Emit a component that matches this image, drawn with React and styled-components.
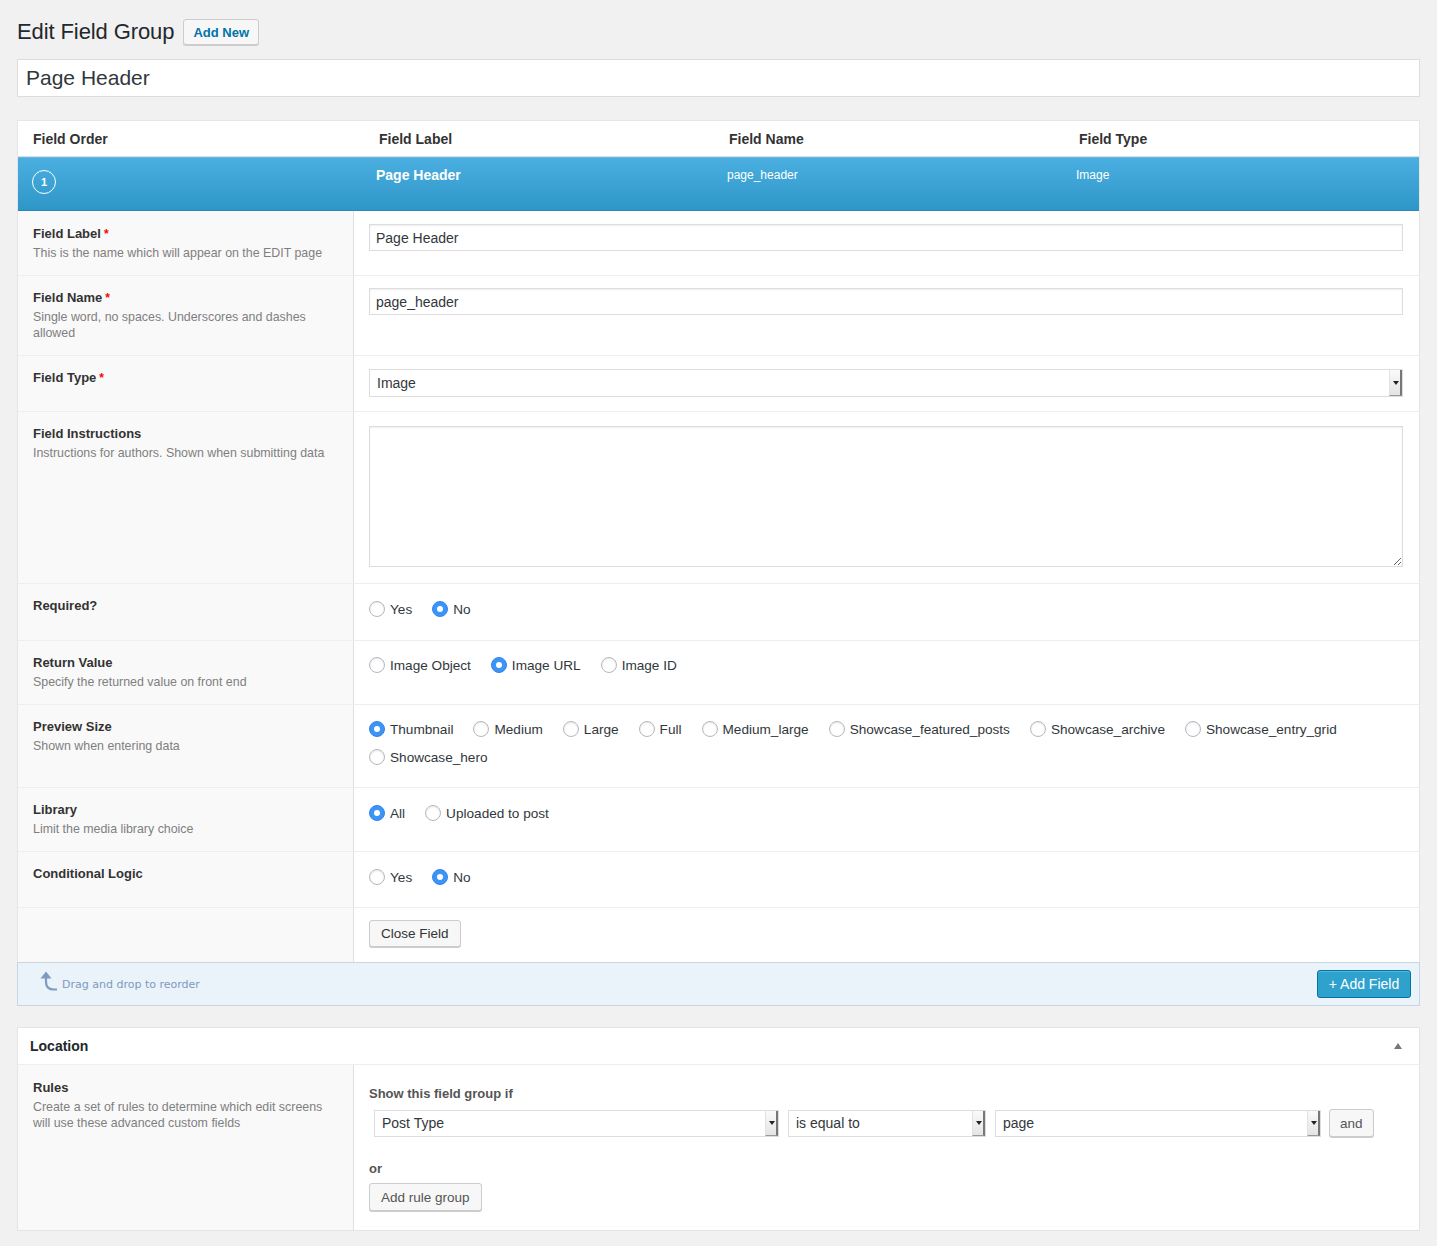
import React from "react";
import styled, { createGlobalStyle } from "styled-components";

const GlobalStyle = createGlobalStyle`
  * {
    box-sizing: border-box;
  }

  body {
    margin: 0;
    background: #f1f1f1;
    font-family: "Liberation Sans", Arial, sans-serif;
    color: #444;
  }
`;

const Page = styled.div`
  padding: 19px 17px 17px;
`;

const TitleRow = styled.div`
  display: flex;
  align-items: center;
  height: 26px;

  h1 {
    margin: 0 9px 0 0;
    font-size: 22px;
    font-weight: 400;
    color: #23282d;
    letter-spacing: -0.1px;
  }
`;

const Button = styled.button`
  height: ${props => props.$h || 27}px;
  padding: 0 ${props => props.$px || 11}px;
  border: 1px solid #ccc;
  border-radius: 3px;
  background: #f7f7f7;
  box-shadow: 0 1px 0 #ccc;
  font-family: inherit;
  font-size: ${props => props.$fs || 13.5}px;
  font-weight: ${props => (props.$bold ? 700 : 400)};
  color: ${props => props.$color || "#555"};
  cursor: pointer;
`;

const PrimaryButton = styled.button`
  height: 28px;
  width: 94px;
  border: 1px solid #0074a2;
  border-radius: 3px;
  background: #2ea2cc;
  box-shadow: inset 0 1px 0 rgba(120, 200, 230, 0.5);
  color: #fff;
  font-family: inherit;
  font-size: 14px;
`;

const TitleInput = styled.input`
  display: block;
  width: 100%;
  height: 38px;
  margin-top: 14px;
  padding: 0 8px;
  border: 1px solid #ddd;
  background: #fff;
  font-family: inherit;
  font-size: 21px;
  color: #32373c;
  outline: none;
`;

const Box = styled.div`
  margin-top: ${props => props.$mt}px;
  background: #fff;
  border: 1px solid #e5e5e5;
`;

const HeadRow = styled.div`
  display: grid;
  grid-template-columns: 346px 350px 350px 1fr;
  align-items: center;
  height: 36px;
  padding-left: 15px;
  border-bottom: 1px solid #dcdcdc;
  font-size: 14px;
  font-weight: 700;
  color: #333;
`;

const BlueRow = styled.div`
  display: grid;
  grid-template-columns: 344px 351px 349px 1fr;
  align-items: start;
  height: 54px;
  padding-left: 14px;
  background: linear-gradient(#4aafe0, #2f96c8);
  border-top: 1px solid #5ebbe6;
  border-bottom: 1px solid #2a88b8;
  color: #fff;
`;

const OrderCircle = styled.span`
  display: flex;
  align-items: center;
  justify-content: center;
  width: 24px;
  height: 24px;
  margin-top: 12px;
  border: 1.5px solid #fff;
  border-radius: 50%;
  font-size: 11px;
  font-weight: 700;
`;

const BlueCell = styled.span`
  padding-top: ${props => (props.$big ? 9 : 10)}px;
  font-size: ${props => (props.$big ? 14 : 12)}px;
  font-weight: ${props => (props.$big ? 700 : 400)};
`;

const SettingRow = styled.div`
  display: grid;
  grid-template-columns: 336px 1fr;
  min-height: ${props => props.$h}px;
  border-top: ${props => (props.$first ? "none" : "1px solid #eee")};
`;

const LabelCell = styled.div`
  padding: ${props => props.$pt || 14}px 16px 12px 15px;
  background: #f9f9f9;
  border-right: 1px solid #e1e1e1;
`;

const Label = styled.div`
  font-size: 13px;
  font-weight: 700;
  line-height: 16px;
  color: #333;

  em {
    font-style: normal;
    color: #f00;
    margin-left: 3px;
    font-size: 12px;
  }
`;

const Desc = styled.div`
  margin-top: 3px;
  font-size: 12.4px;
  line-height: 16px;
  color: #7f7f7f;
`;

const InputCell = styled.div`
  padding: ${props => props.$pt || 13}px 16px 13px 15px;
`;

const TextInput = styled.input`
  display: block;
  width: 100%;
  height: 27px;
  padding: 0 6px;
  border: 1px solid #ddd;
  box-shadow: inset 0 1px 2px rgba(0, 0, 0, 0.07);
  font-family: inherit;
  font-size: 14px;
  color: #32373c;
  outline: none;
`;

const TextArea = styled.textarea`
  display: block;
  width: 100%;
  height: 141px;
  padding: 6px;
  border: 1px solid #ddd;
  box-shadow: inset 0 1px 2px rgba(0, 0, 0, 0.07);
  font-family: inherit;
  font-size: 14px;
  outline: none;
`;

const SelectBox = styled.div`
  display: flex;
  align-items: center;
  width: ${props => (props.$w ? `${props.$w}px` : "100%")};
  height: ${props => props.$h || 27}px;
  padding-left: 7px;
  border: 1px solid #ddd;
  background: #fff;
  font-size: 14px;
  color: #32373c;

  span {
    flex: 1;
  }
`;

const SelectArrow = styled.i`
  position: relative;
  align-self: stretch;
  width: 13px;
  background: linear-gradient(#fafafa, #e4e4e4);
  border-left: 1px solid #e2e2e2;
  border-right: 2px solid #777;
  border-bottom: 1px solid #999;

  &::after {
    content: "";
    position: absolute;
    left: 3px;
    top: 50%;
    margin-top: -2px;
    border-left: 3px solid transparent;
    border-right: 3px solid transparent;
    border-top: 4px solid #222;
  }
`;

const RadioList = styled.div`
  display: flex;
  flex-wrap: wrap;
  column-gap: 20px;
  row-gap: 8px;
  padding-top: ${props => props.$pt || 2}px;
`;

const RadioItem = styled.label`
  display: flex;
  align-items: center;
  gap: 5px;
  height: 20px;
  font-size: 13.6px;
  color: #32373c;
`;

const RadioDot = styled.span`
  position: relative;
  width: 16px;
  height: 16px;
  border-radius: 50%;
  border: 1px solid ${props => (props.$on ? "#2f86ee" : "#b4b9be")};
  background: ${props => (props.$on ? "#3d94f6" : "#fff")};
  box-shadow: ${props => (props.$on ? "none" : "inset 0 1px 2px rgba(0,0,0,0.1)")};

  &::after {
    content: "";
    display: ${props => (props.$on ? "block" : "none")};
    position: absolute;
    left: 4px;
    top: 4px;
    width: 6px;
    height: 6px;
    border-radius: 50%;
    background: #fff;
  }
`;

const Footer = styled.div`
  display: flex;
  align-items: center;
  justify-content: space-between;
  height: 44px;
  margin: 0 -1px -1px;
  padding: 0 8px 0 20px;
  background: #eaf2fa;
  border: 1px solid #c7d7e2;
`;

const DragHint = styled.div`
  display: flex;
  align-items: center;
  gap: 4px;
  font-family: "DejaVu Sans", sans-serif;
  font-size: 11px;
  color: #7c9bc0;

  svg {
    transform: translateY(-3px);
  }
`;

const BoxHead = styled.div`
  display: flex;
  align-items: center;
  justify-content: space-between;
  height: 37px;
  padding: 0 17px 0 12px;
  border-bottom: 1px solid #eee;
  font-size: 14px;
  font-weight: 700;
  color: #23282d;

  i {
    border-left: 4.5px solid transparent;
    border-right: 4.5px solid transparent;
    border-bottom: 6px solid #777;
  }
`;

const RulesCell = styled.div`
  padding: 21px 16px 18px 15px;
`;

const SubHead = styled.div`
  font-size: 13px;
  font-weight: 700;
  line-height: 16px;
  color: #555;
  margin-top: ${props => props.$mt || 0}px;
`;

const RuleLine = styled.div`
  display: flex;
  align-items: center;
  gap: 9px;
  margin-top: 7px;
  padding-left: 5px;

  button {
    margin-left: -1px;
  }
`;

const RuleGroupButton = styled(Button)`
  margin-top: 6px;
  height: 28px;
`;

const Radios = ({ options, value, pt }) => (
  <RadioList $pt={pt}>
    {options.map(o => (
      <RadioItem key={o}>
        <RadioDot $on={o === value} />
        {o}
      </RadioItem>
    ))}
  </RadioList>
);

const Select = ({ children, w, h }) => (
  <SelectBox $w={w} $h={h}>
    <span>{children}</span>
    <SelectArrow />
  </SelectBox>
);

const Setting = ({ label, req, desc, h, first, pt, children }) => (
  <SettingRow $h={h} $first={first}>
    <LabelCell $pt={first ? 15 : 14}>
      <Label>
        {label}
        {req && <em>*</em>}
      </Label>
      {desc && <Desc>{desc}</Desc>}
    </LabelCell>
    <InputCell $pt={pt || (first ? 13 : 12)}>{children}</InputCell>
  </SettingRow>
);

const sizes = [
  "Thumbnail",
  "Medium",
  "Large",
  "Full",
  "Medium_large",
  "Showcase_featured_posts",
  "Showcase_archive",
  "Showcase_entry_grid",
  "Showcase_hero"
];

export default function App() {
  return (
    <Page>
      <GlobalStyle />
      <TitleRow>
        <h1>Edit Field Group</h1>
        <Button $h={26} $px={9} $fs={13} $bold $color="#0073aa">
          Add New
        </Button>
      </TitleRow>
      <TitleInput defaultValue="Page Header" />

      <Box $mt={23}>
        <HeadRow>
          <span>Field Order</span>
          <span>Field Label</span>
          <span>Field Name</span>
          <span>Field Type</span>
        </HeadRow>
        <BlueRow>
          <OrderCircle>1</OrderCircle>
          <BlueCell $big>Page Header</BlueCell>
          <BlueCell>page_header</BlueCell>
          <BlueCell>Image</BlueCell>
        </BlueRow>

        <Setting first h={64} label="Field Label" req desc="This is the name which will appear on the EDIT page">
          <TextInput defaultValue="Page Header" />
        </Setting>
        <Setting h={80} label="Field Name" req desc="Single word, no spaces. Underscores and dashes allowed">
          <TextInput defaultValue="page_header" />
        </Setting>
        <Setting h={56} pt={13} label="Field Type" req>
          <Select h={28}>Image</Select>
        </Setting>
        <Setting h={172} pt={14} label="Field Instructions" desc="Instructions for authors. Shown when submitting data">
          <TextArea />
        </Setting>
        <Setting h={57} label="Required?">
          <Radios options={["Yes", "No"]} value="No" pt={3} />
        </Setting>
        <Setting h={64} label="Return Value" desc="Specify the returned value on front end">
          <Radios options={["Image Object", "Image URL", "Image ID"]} value="Image URL" pt={2} />
        </Setting>
        <Setting h={83} label="Preview Size" desc="Shown when entering data">
          <Radios options={sizes} value="Thumbnail" pt={2} />
        </Setting>
        <Setting h={64} label="Library" desc="Limit the media library choice">
          <Radios options={["All", "Uploaded to post"]} value="All" pt={3} />
        </Setting>
        <Setting h={56} label="Conditional Logic">
          <Radios options={["Yes", "No"]} value="No" pt={3} />
        </Setting>
        <SettingRow $h={55}>
          <LabelCell />
          <InputCell $pt={12}>
            <Button $color="#333">Close Field</Button>
          </InputCell>
        </SettingRow>

        <Footer>
          <DragHint>
            <svg width="20" height="22" viewBox="0 0 20 22" fill="none">
              <path d="M8 7 V12 Q8 19.5 16 19.5 H19" stroke="#7c9bc0" strokeWidth="2.2" fill="none" />
              <path d="M2.5 8.5 L8 1.5 L13.5 8.5 Z" fill="#7c9bc0" />
            </svg>
            <span>Drag and drop to reorder</span>
          </DragHint>
          <PrimaryButton>+ Add Field</PrimaryButton>
        </Footer>
      </Box>

      <Box $mt={21}>
        <BoxHead>
          <span>Location</span>
          <i />
        </BoxHead>
        <SettingRow $first $h={165}>
          <LabelCell $pt={15}>
            <Label>Rules</Label>
            <Desc>Create a set of rules to determine which edit screens will use these advanced custom fields</Desc>
          </LabelCell>
          <RulesCell>
            <SubHead>Show this field group if</SubHead>
            <RuleLine>
              <Select w={405}>Post Type</Select>
              <Select w={198}>is equal to</Select>
              <Select w={326}>page</Select>
              <Button $h={28} $px={10}>and</Button>
            </RuleLine>
            <SubHead $mt={24}>or</SubHead>
            <RuleGroupButton>Add rule group</RuleGroupButton>
          </RulesCell>
        </SettingRow>
      </Box>
    </Page>
  );
}
